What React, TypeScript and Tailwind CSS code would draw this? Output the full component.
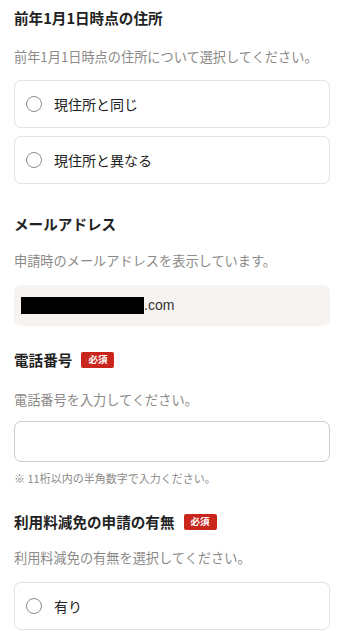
const font = { fontFamily: '"Noto Sans CJK JP", "Noto Sans", sans-serif' }

function Radio({ label }: { label: string }) {
  return (
    <label className="flex h-[48px] items-center rounded-[7px] border border-[#e3e0de] bg-white px-[11px]">
      <span className="h-[16px] w-[16px] rounded-full border border-[#8a8a8a] bg-white" />
      <span className="ml-[12px] text-[14px] text-[#222]">{label}</span>
    </label>
  )
}

function Badge() {
  return (
    <span className="ml-[9px] inline-flex h-[16px] items-center rounded-[2px] bg-[#c9261e] px-[7px] text-[9.5px] font-bold leading-none text-white">
      必須
    </span>
  )
}

export default function App() {
  return (
    <div className="min-h-[640px] bg-white px-[14px] text-[#222]" style={font}>
      {/* 前年1月1日時点の住所 */}
      <div className="pt-[7px]">
        <h2 className="text-[14.6px] font-bold leading-[22px]">前年1月1日時点の住所</h2>
        <p className="mt-[18px] text-[13.2px] leading-[20px] text-[#8c8a88]">
          前年1月1日時点の住所について選択してください。
        </p>
        <div className="mt-[13px] flex flex-col gap-[8px]">
          <Radio label="現住所と同じ" />
          <Radio label="現住所と異なる" />
        </div>
      </div>

      {/* メールアドレス */}
      <div className="mt-[29px]">
        <h2 className="text-[14.6px] font-bold leading-[22px]">メールアドレス</h2>
        <p className="mt-[16px] text-[13.2px] leading-[20px] text-[#8c8a88]">
          申請時のメールアドレスを表示しています。
        </p>
        <div className="mt-[14px] flex h-[41px] items-center rounded-[7px] bg-[#f7f3f1] px-[7px]">
          <span className="h-[17px] w-[123px] bg-black" />
          <span className="text-[14px] text-[#333]" style={{ fontFamily: '"Liberation Sans", sans-serif' }}>
            .com
          </span>
        </div>
      </div>

      {/* 電話番号 */}
      <div className="mt-[23px]">
        <h2 className="flex items-center text-[14.6px] font-bold leading-[22px]">
          電話番号
          <Badge />
        </h2>
        <p className="mt-[19px] text-[13.2px] leading-[20px] text-[#8c8a88]">電話番号を入力してください。</p>
        <input
          type="tel"
          className="mt-[11px] block h-[41px] w-full rounded-[7px] border border-[#cfcbc8] bg-white px-3 text-[14px] outline-none"
        />
        <p className="mt-[8px] text-[11px] leading-[16px] text-[#8c8a88]">※ 11桁以内の半角数字で入力ください。</p>
      </div>

      {/* 利用料減免の申請の有無 */}
      <div className="mt-[25px]">
        <h2 className="flex items-center text-[14.6px] font-bold leading-[22px]">
          利用料減免の申請の有無
          <Badge />
        </h2>
        <p className="mt-[15px] text-[13.2px] leading-[20px] text-[#8c8a88]">
          利用料減免の有無を選択してください。
        </p>
        <div className="mt-[14px]">
          <Radio label="有り" />
        </div>
      </div>
    </div>
  )
}
